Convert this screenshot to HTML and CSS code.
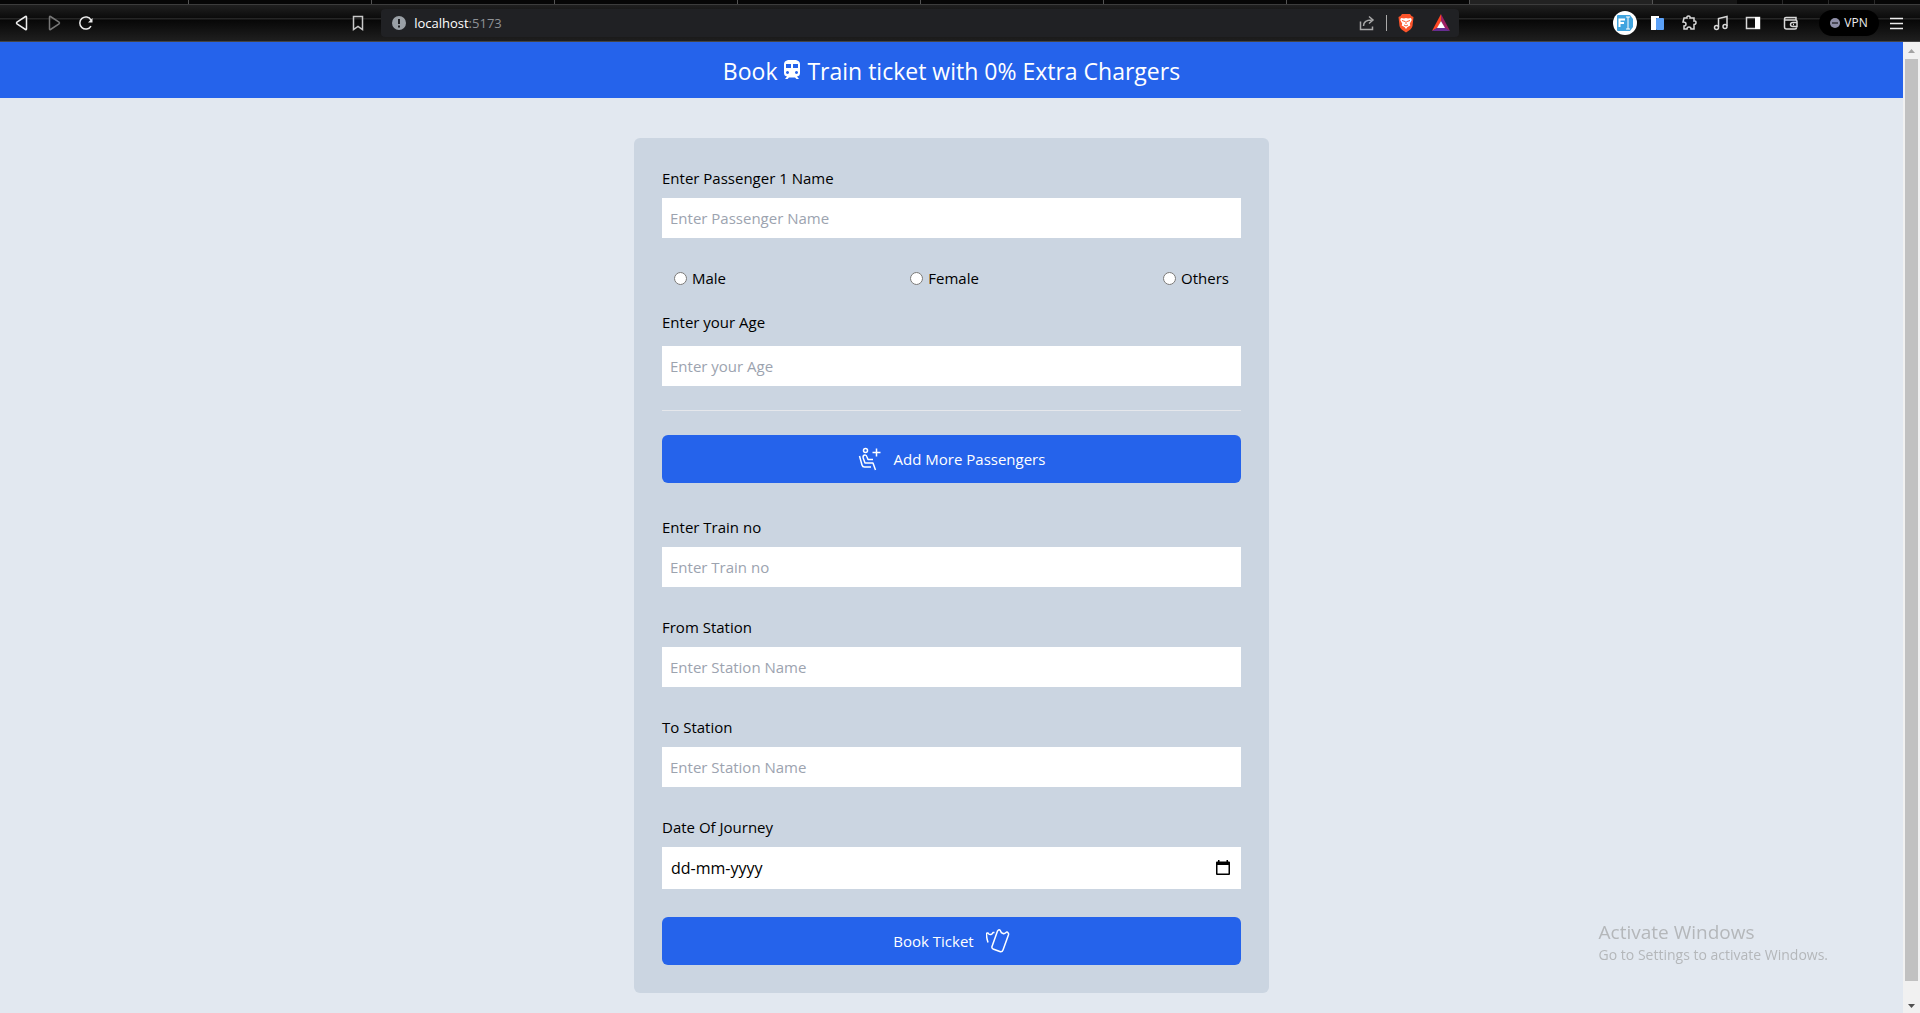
FILE: index.html
```html
<!DOCTYPE html>
<html lang="en">
<head>
<meta charset="utf-8">
<meta name="viewport" content="width=device-width, initial-scale=1">
<title>Train Ticket Booking</title>
<link rel="stylesheet" href="styles.css">
</head>
<body>
<div class="browser">
  <div class="tabs">
    <span class="tab tab-first"></span><span class="tab"></span><span class="tab"></span><span class="tab"></span><span class="tab"></span><span class="tab"></span><span class="tab"></span><span class="tab"></span><span class="tab tab-active"></span><span class="tab-group"></span><span class="tab-mini"></span><span class="tab-mini"></span><span class="tab-mini"></span><span class="tab-rest"></span>
  </div>
  <div class="toolbar">
    <div class="nav">
      <button class="tool" aria-label="Back"><svg width="16" height="16" viewBox="0 0 16 16"><path d="M12.500 2v12q0 1-1 .5L3 9Q2 8 3 7l8.500-5.500q1-.5 1 .5z" /></svg></button>
      <button class="tool dim" aria-label="Forward"><svg width="16" height="16" viewBox="0 0 16 16"><path d="M3.500 2v12q0 1 1 .5L13 9q1-1 0-2L4.500 1.500q-1-.5-1 .5z" /></svg></button>
      <button class="tool" aria-label="Reload"><svg width="16" height="16" viewBox="0 0 16 16"><path d="M13 11a6 6 0 1 1 0-6"/><path d="M14.500 3v4.500H10z" class="solid"/></svg></button>
    </div>
    <button class="tool bookmark" aria-label="Bookmark"><svg width="16" height="16" viewBox="0 0 16 16"><path d="M3.500 1.500h9v13L8 11.500l-4.500 3z"/></svg></button>
    <div class="address">
      <svg width="14" height="14" viewBox="0 0 14 14"><circle cx="7" cy="7" r="7" fill="#9aa0a6"/><path d="M7 3v5M7 9.500v2" stroke="#202124" stroke-width="2"/></svg>
      <span class="url">localhost<span class="port">:5173</span></span>
      <svg class="line-icon" width="16" height="16" viewBox="0 0 16 16"><path d="M1.500 6.500v8h12v-3M4.500 11q0-6 8-6M10 1.500L14 5l-4 3.500"/></svg>
      <span class="divider"></span>
      <svg class="brave" width="16" height="20" viewBox="0 0 16 20"><path d="M4 1h8l1.500 2L15.500 4l-1 9Q14 16 8 19.500 2 16 1.500 13l-1-9L2.500 3z" fill="#fb542b"/><path d="M3 5l3 .5L8 5l2 .5 3-.5.8 2-2 3.500.5 2L9.500 14 8 16l-1.500-2-2.800-1.500.5-2-2-3.500z" fill="#fff"/><path d="M4 7.500l3 1M12 7.500l-3 1M8 8v3M6 12l2 1 2-1" stroke="#fb542b" fill="none"/></svg>
      <svg width="18" height="18" viewBox="0 0 18 18"><path d="M9 0L0 17l5.500-3L9 7z" fill="#ff4724"/><path d="M9 0l9 17-5.500-3L9 7z" fill="#9e1f63"/><path d="M0 17h18l-5.500-3.500h-7z" fill="#662d91"/><path d="M9 7l4 7H5z" fill="#fff"/></svg>
    </div>
    <div class="extensions">
      <svg width="24" height="24" viewBox="0 0 24 24"><circle cx="12" cy="12" r="12" fill="#fff"/><path d="M4 5q0-1 1-1h12l3 4v8l-3 4H5q-1 0-1-1z" fill="#40a4df"/><path d="M6.500 16V8.500H12M6.500 12H11" stroke="#fff" stroke-width="2" fill="none"/><path d="M13 6h4M13 18h4M15 6v12" stroke="#fff" fill="none"/></svg>
      <svg width="16" height="16" viewBox="0 0 16 16"><path d="M2 1h8v2H7v12H2z" fill="#fff"/><rect x="7" y="3" width="8" height="12" rx="1" fill="#5ba1f8"/></svg>
      <svg class="line-icon" width="16" height="16" viewBox="0 0 16 16"><path d="M3 3h3q-.5-2 1.500-2T9 3h4v3q2-.5 2 1.500T13 9.500V14h-3q0-2-2-2t-2 2H3v-3q2 0 2-2T2 7z"/></svg>
      <svg class="line-icon" width="16" height="16" viewBox="0 0 16 16"><path d="M5.500 12V3.500L14 1.500V11"/><ellipse cx="3.500" cy="12.500" rx="2" ry="2"/><ellipse cx="12" cy="11.500" rx="2" ry="2"/></svg>
      <svg class="line-icon" width="16" height="16" viewBox="0 0 16 16"><rect x="1.500" y="2.500" width="13" height="11"/><path d="M10 2h5v12h-5z" fill="#fff" stroke="none"/></svg>
      <svg class="line-icon wallet" width="16" height="16" viewBox="0 0 16 16"><path d="M13 5V2.500H3q-1.500 0-1.500 1.500v8q0 2 2 2H12q1.500 0 1.500-1.500M2 5h10.500q1.500 0 1.500 1.500v5H10q-2.500 0-2.500-2T10 7.500h4.500M10 9.500h1"/></svg>
      <button class="vpn"><svg width="10" height="10" viewBox="0 0 10 10"><circle cx="5" cy="5" r="5" fill="#8f8fa8"/><path d="M2 5h6" stroke="#000"/></svg>VPN</button>
      <button class="tool" aria-label="Menu"><svg width="16" height="16" viewBox="0 0 16 16"><path d="M1 3.500h13M1 8.500h13M1 13.500h13"/></svg></button>
    </div>
  </div>
</div>
<div class="viewport">
  <div class="page">
    <header class="banner">
      <h1>Book <svg class="train" width="18" height="20" viewBox="0 0 18 20"><path fill="currentColor" fill-rule="evenodd" d="M5 0h8q4 1 4 4v9q0 3-3 3.500l2 2.500h-2.500L12 17.500H6L4.500 19H2l2-2.500Q1 16 1 13V4q0-3 4-4zM3 4v4h5V4zM10 4v4h5V4zM4.500 11a1.500 1.500 0 1 0 .01 0zM13.500 11a1.500 1.500 0 1 0 .01 0z"/></svg> Train ticket with 0% Extra Chargers</h1>
    </header>
    <main class="content">
      <form class="card">
        <div class="field">
          <label for="name">Enter Passenger 1 Name</label>
          <input id="name" type="text" placeholder="Enter Passenger Name">
        </div>
        <div class="genders">
          <label><input type="radio" name="gender">Male</label>
          <label><input type="radio" name="gender">Female</label>
          <label><input type="radio" name="gender">Others</label>
        </div>
        <div class="field field-age">
          <label for="age">Enter your Age</label>
          <input id="age" type="text" placeholder="Enter your Age">
        </div>
        <hr>
        <button class="primary" type="button"><svg width="24" height="24" viewBox="0 0 24 24"><circle cx="7.500" cy="3.500" r="2"/><path d="M18.500 1.500v8M14.500 5.500h8M1.500 9l2.500 9q.5 2 2.500 2H13M5 10.500q0-2.500 2-2.500 1.500 0 2 2L10 12.500h5M5 10.500L7 16h8L17.500 23"/></svg>Add More Passengers</button>
        <div class="field field-first">
          <label for="train">Enter Train no</label>
          <input id="train" type="text" placeholder="Enter Train no">
        </div>
        <div class="field">
          <label for="from">From Station</label>
          <input id="from" type="text" placeholder="Enter Station Name">
        </div>
        <div class="field">
          <label for="to">To Station</label>
          <input id="to" type="text" placeholder="Enter Station Name">
        </div>
        <div class="field">
          <label for="date">Date Of Journey</label>
          <div class="date">
            <input id="date" type="text" placeholder="dd-mm-yyyy">
            <button type="button" aria-label="Open calendar"><svg width="16" height="16" viewBox="0 0 16 16"><path fill="#000" fill-rule="evenodd" d="M3 0h1.500v1.500h7V0H13v1.500h1q1 0 1 1V14q0 1-1 1H2q-1 0-1-1V2.500q0-1 1-1h1zM2.500 5v8.500h11V5z"/></svg></button>
          </div>
        </div>
        <button class="primary" type="submit">Book Ticket<svg width="24" height="24" viewBox="0 0 24 24"><path d="M12.500 1q1.500-.5 2 1 .5 2 2.500 2.500 1.500.5 3-1 1-1 2 .2.800.8.500 2L17 21q-.7 2-2.500 1.800L7 20q-1.500-1-1-2.500L11.500 2z"/><path d="M2 13.500Q.5 9 .5 5.500q0-2 1.500-1.500 1 2 3 1.500 1.500-.5 2-2h1.500"/></svg></button>
      </form>
    </main>
  </div>
  <div class="scrollbar">
    <svg width="17" height="17" viewBox="0 0 17 17"><path d="M5 11l3.500-4 3.500 4z" fill="#a3a3a3"/></svg>
    <span class="thumb"></span>
    <svg width="17" height="17" viewBox="0 0 17 17"><path d="M5 8l3.500 4L12 8z" fill="#505050"/></svg>
  </div>
</div>
<div class="watermark">
  <p class="watermark-title">Activate Windows</p>
  <p class="watermark-text">Go to Settings to activate Windows.</p>
</div>
</body>
</html>
```
FILE: styles.css
```css
* { box-sizing: border-box; }

body {
  margin: 0;
  min-height: 100vh;
  display: flex;
  flex-direction: column;
  background: #e2e8f0;
  color: #000;
  font: 15px/24px "Open Sans", "Noto Sans", sans-serif;
}

h1, p { margin: 0; font-weight: 400; }
button, input { font: inherit; }
button { border: 0; padding: 0; background: none; color: inherit; display: flex; align-items: center; justify-content: center; cursor: pointer; }
svg { flex: none; }

/* Browser frame */
.browser { flex: none; background: #0c0c0c; }
.tabs { display: flex; height: 4px; background: #060606; }
.tab { flex: 0 1 183px; border-right: 1px solid #555; }
.tab-first { flex-basis: 189px; }
.tab-active { background: #222; }
.tab-group { flex: 0 1 84px; background: #161616; }
.tab-mini { flex: 0 1 46px; border-right: 1px solid #2a2a2a; }
.tab-rest { flex: 1; }
.toolbar {
  display: flex;
  align-items: center;
  height: 38px;
  padding: 0 15px 0 14px;
  border-top: 1px solid #3c3c3c;
  border-bottom: 1px solid #444;
  background: linear-gradient(#202020, #0b0b0b 13px, #262626 13px, #262626 14px, #070707 15px, #1f1f1f);
}
.nav { display: flex; gap: 16px; }
.tool { color: #ececec; width: 16px; height: 16px; }
.dim { color: #777; }
.tool svg, .line-icon { fill: none; stroke: currentColor; stroke-width: 1.5; }
.tool .solid { fill: currentColor; stroke: none; }
.bookmark { margin-left: auto; margin-right: 15px; color: #c8c8c8; }
.address {
  flex: 0 0 57%;
  display: flex;
  align-items: center;
  height: 28px;
  padding: 0 9px 0 11px;
  border-radius: 4px;
  background: #202124;
  color: #a8a8a8;
}
.url { flex: 1; margin-left: 8px; color: #fff; font-size: 13px; line-height: 20px; }
.port { color: #8e9196; }
.divider { width: 1px; height: 16px; margin: 0 11px; background: #aaa; }
.brave { margin-right: 18px; }
.extensions { display: flex; align-items: center; gap: 16px; margin-left: 154px; color: #d8d8d8; }
.extensions > svg:first-child { margin-right: -4px; }
.wallet { margin-left: 6px; margin-right: 4px; }
.vpn { gap: 4px; width: 60px; height: 26px; margin-right: -6px; border-radius: 13px; background: #000; color: #eee; font-size: 12px; line-height: 16px; }

/* Page */
.viewport { flex: 1; display: flex; }
.page { flex: 1; display: flex; flex-direction: column; }
.banner { padding: 13px 12px 11px; background: #2563eb; color: #fff; text-align: center; }
.banner h1 { font-size: 23px; line-height: 32px; }
.train { vertical-align: 0; }
.content { padding: 40px 16px 20px; }
.card {
  width: 100%;
  max-width: 635px;
  margin: 0 auto;
  padding: 28px;
  display: flex;
  flex-direction: column;
  border-radius: 6px;
  background: #cbd5e1;
}
.field { display: flex; flex-direction: column; gap: 8px; margin-bottom: 28px; }
.field input { width: 100%; height: 40px; padding: 8px; border: 0; border-radius: 0; background: #fff; outline: 0; }
.field input::placeholder { color: #9ca3af; opacity: 1; }
.genders { display: flex; justify-content: space-between; padding: 0 12px; margin-bottom: 20px; }
.genders label { display: flex; align-items: center; gap: 5px; }
.genders input { width: 13px; height: 13px; margin: 0; }
.field-age { gap: 12px; margin-bottom: 24px; }
.field-first { margin-top: 32px; }
hr { width: 100%; margin: 0 0 24px; border: 0; border-top: 1px solid #e5e7eb; }
.date { display: flex; align-items: center; height: 42px; padding-right: 10px; background: #fff; }
.date input { padding-left: 9px; font-size: 16px; }
.field .date input::placeholder { color: #000; }
.primary { width: 100%; height: 48px; gap: 12px; border-radius: 6px; background: #2563eb; color: #fff; }
.primary svg { fill: none; stroke: currentColor; stroke-width: 1.5; stroke-linejoin: round; }

/* Scrollbar */
.scrollbar { flex: none; width: 17px; display: flex; flex-direction: column; background: #f1f1f1; }
.thumb { flex: 1; margin: 0 2px 15px; background: #c1c1c1; }

/* Desktop overlay */
.watermark { position: fixed; right: 92px; bottom: 48px; color: #b4b7ba; pointer-events: none; }
.watermark-title { font-size: 19px; line-height: 26px; }
.watermark-text { font-size: 14px; line-height: 20px; }
```
